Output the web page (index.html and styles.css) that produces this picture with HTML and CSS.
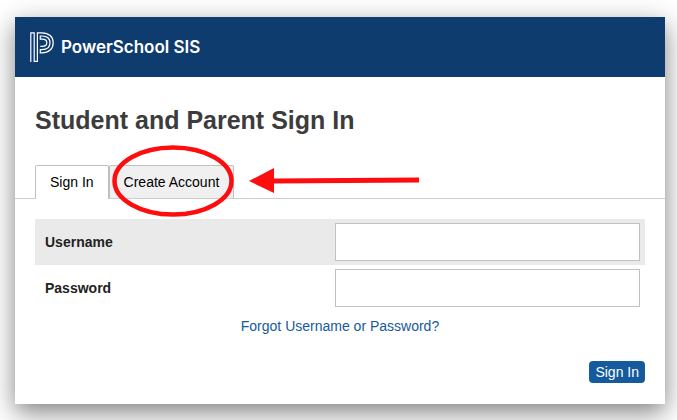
FILE: index.html
```html
<!doctype html>
<html lang="en">
<head>
	<meta charset="UTF-8">
	<title>Student and Parent Sign In</title>
	<link rel="stylesheet" href="styles.css">
</head>
<body>
	<div class="container">
		<header class="header">
			<svg class="logo" width="24" height="30" viewBox="0 0 24 30" fill="none" stroke="#fff" stroke-width="1.2">
				<path d="M.8 30V.8H4.200V29.400H7.400V.8H12C19 .8 23.200 4.800 23.200 10.800S19 20.800 12 20.800H10.300V17.600H12C17 17.600 20 15 20 10.800S17 4 12 4H10.300V7.200H12C15 7.200 16.800 8.600 16.800 10.800S15 14.400 12 14.400H10.300"/>
			</svg>
			<span class="brand">PowerSchool SIS</span>
		</header>
		<main class="content">
			<h1>Student and Parent Sign In</h1>
			<nav class="tabs">
				<a href="#" class="tab active">Sign In</a>
				<a href="#" class="tab">Create Account</a>
				<svg class="callout" width="310" height="74" viewBox="0 0 310 74">
					<ellipse cx="62" cy="37" rx="58.500" ry="33.500" fill="none" stroke="#fd0d0d" stroke-width="4.500"/>
					<path d="M138 37L163 24V34.500L308 33.500V38.500L163 39.500V49Z" fill="#fd0d0d"/>
				</svg>
			</nav>
			<form action="" class="form">
				<div class="field-group shaded">
					<label for="username" class="field-label">Username</label>
					<input type="text" id="username" name="username" class="field">
				</div>
				<div class="field-group">
					<label for="password" class="field-label">Password</label>
					<input type="password" id="password" name="password" class="field">
				</div>
				<p class="forgot"><a href="#">Forgot Username or Password?</a></p>
				<div class="actions">
					<button type="submit" class="btn">Sign In</button>
				</div>
			</form>
		</main>
	</div>
</body>
</html>
```

FILE: styles.css
```css
*{box-sizing:border-box;}
body{margin:0;padding:17px 12px 16px 15px;background:#fff;color:#000;font:14px/20px "Liberation Sans",Arial,sans-serif;}
.container{background:#fff;box-shadow:0 8px 24px rgba(0,0,0,.5);}

.header{display:flex;align-items:center;gap:7px;height:60px;padding:0 15px;background:#0f3c6f;color:#fff;}
.brand{font:600 17px/20px "Inter",sans-serif;}

.content{padding:27px 0 21px;}
h1{margin:0 20px;color:#3c3c3c;font-size:25px;line-height:32px;}

.tabs{position:relative;display:flex;margin-top:29px;padding:0 20px;border-bottom:1px solid #ccc;}
.tab{height:33px;padding:6px 14px;border:1px solid #c0c0c0;border-bottom:0;border-radius:2px 2px 0 0;background:#f0f0f0;color:#000;text-decoration:none;}
.tab.active{height:34px;margin-bottom:-1px;background:#fff;}
/* red circle and arrow over the second tab */
.callout{position:absolute;left:96px;top:-21px;pointer-events:none;}

.form{margin:20px 20px 0;}
.field-group{display:flex;align-items:center;justify-content:space-between;height:46px;padding:0 5px 0 10px;}
.field-group.shaded{background:#eaeaea;}
.field-label{color:#222;font-weight:bold;}
.field{width:305px;height:38px;padding:0 8px;border:1px solid #c1c1c1;background:#fff;font:inherit;}
.forgot{margin:5px 0 0;text-align:center;}
.forgot a{color:#145a9c;text-decoration:none;}
.actions{display:flex;justify-content:flex-end;margin-top:25px;}
.btn{height:22px;padding:0 6px;border:0;border-radius:4px;background:#145a9c;color:#fff;font:inherit;cursor:pointer;}
```
